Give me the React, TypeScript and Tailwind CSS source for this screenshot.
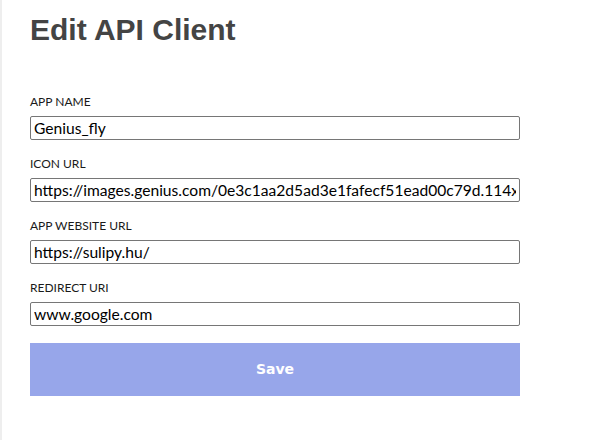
const fields = [
  { label: "APP NAME", value: "Genius_fly" },
  {
    label: "ICON URL",
    value:
      "https://images.genius.com/0e3c1aa2d5ad3e1fafecf51ead00c79d.114x114x1.png",
  },
  { label: "APP WEBSITE URL", value: "https://sulipy.hu/" },
  { label: "REDIRECT URI", value: "www.google.com" },
];

export default function App() {
  return (
    <div className="w-[604px] h-[440px] bg-white border-l-2 border-[#eeeeee] overflow-hidden">
      <div className="pl-[28px] pt-[11px] w-[520px]">
        <h1 className="text-[30px] font-bold text-[#444444] font-['Liberation_Sans',sans-serif] leading-[38px]">
          Edit API Client
        </h1>
        <form className="mt-[45px] flex flex-col">
          {fields.map((f) => (
            <div key={f.label} className="flex flex-col mb-[16px]">
              <label className="text-[12px] text-[#1a1a1a] font-['Lato',sans-serif] leading-[16px] mb-[6px]">
                {f.label}
              </label>
              <input
                readOnly
                value={f.value}
                className="h-[24px] w-[490px] border border-[#767676] rounded-[2px] px-[3px] text-[15.6px] text-black font-['Lato',sans-serif] outline-none"
              />
            </div>
          ))}
          <button
            type="button"
            className="mt-[1px] h-[53px] w-[490px] bg-[#97a6ea] text-white text-[14px] font-bold font-['DejaVu_Sans',sans-serif]"
          >
            Save
          </button>
        </form>
      </div>
    </div>
  );
}
